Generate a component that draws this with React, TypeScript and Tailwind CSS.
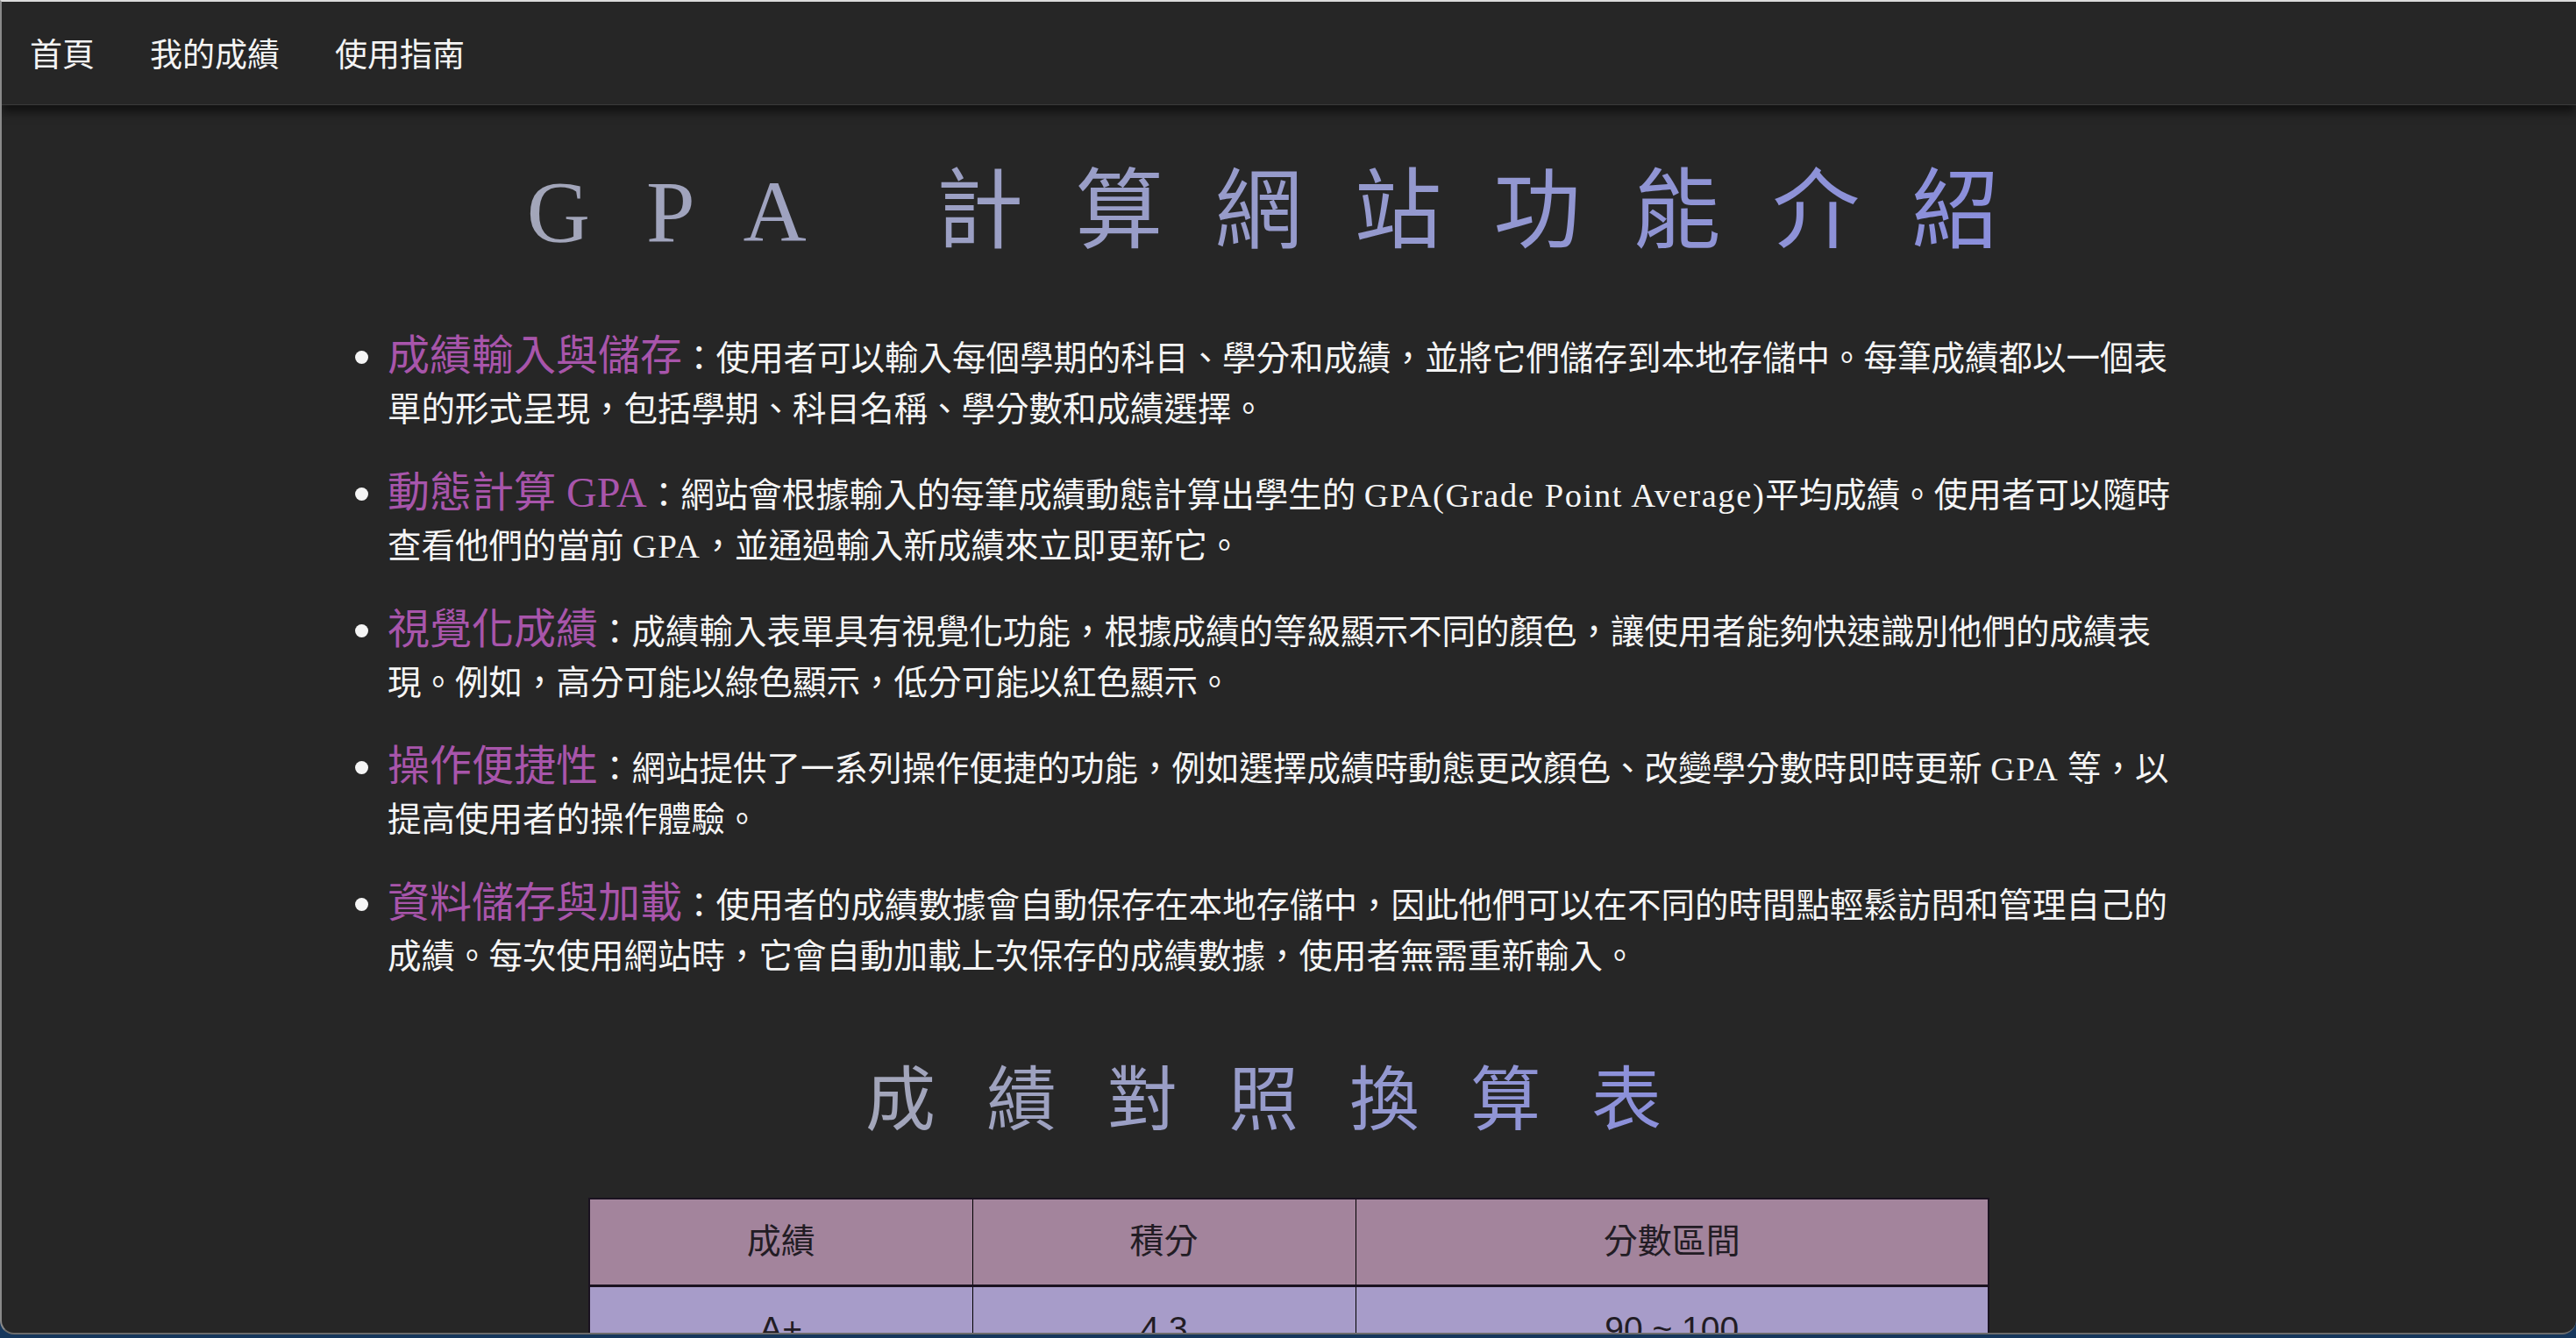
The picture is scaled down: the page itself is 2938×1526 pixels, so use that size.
const features = [
  {
    title: "成績輸入與儲存",
    lines: [
      "：使用者可以輸入每個學期的科目、學分和成績，並將它們儲存到本地存儲中。每筆成績都以一個表",
      "單的形式呈現，包括學期、科目名稱、學分數和成績選擇。",
    ],
  },
  {
    title: "動態計算 GPA",
    lines: [
      "：網站會根據輸入的每筆成績動態計算出學生的 GPA(Grade Point Average)平均成績。使用者可以隨時",
      "查看他們的當前 GPA，並通過輸入新成績來立即更新它。",
    ],
  },
  {
    title: "視覺化成績",
    lines: [
      "：成績輸入表單具有視覺化功能，根據成績的等級顯示不同的顏色，讓使用者能夠快速識別他們的成績表",
      "現。例如，高分可能以綠色顯示，低分可能以紅色顯示。",
    ],
  },
  {
    title: "操作便捷性",
    lines: [
      "：網站提供了一系列操作便捷的功能，例如選擇成績時動態更改顏色、改變學分數時即時更新 GPA 等，以",
      "提高使用者的操作體驗。",
    ],
  },
  {
    title: "資料儲存與加載",
    lines: [
      "：使用者的成績數據會自動保存在本地存儲中，因此他們可以在不同的時間點輕鬆訪問和管理自己的",
      "成績。每次使用網站時，它會自動加載上次保存的成績數據，使用者無需重新輸入。",
    ],
  },
]

const grades = [
  ["A+", "4.3", "90 ~ 100"],
  ["A", "4.0", "85 ~ 89"],
  ["A-", "3.7", "80 ~ 84"],
  ["B+", "3.3", "77 ~ 79"],
  ["B", "3.0", "73 ~ 76"],
  ["B-", "2.7", "70 ~ 72"],
  ["C+", "2.3", "67 ~ 69"],
  ["C", "2.0", "63 ~ 66"],
  ["C-", "1.7", "60 ~ 62"],
  ["F", "0", "0 ~ 59"],
]

// latin runs get a touch of tracking so they read as wide as the original serif
function Line({ text }: { text: string }) {
  const parts = text.split(/([A-Za-z][A-Za-z() ]*[A-Za-z)])/)
  return (
    <>
      {parts.map((p, i) =>
        i % 2 === 1 ? (
          <span key={i} className="tracking-[1.6px]">
            {p}
          </span>
        ) : (
          p
        )
      )}
    </>
  )
}

export default function App() {
  return (
    <div className="h-screen w-full overflow-hidden bg-[#16375c]">
      <div className="flex h-[1522px] flex-col overflow-hidden rounded-b-[16px] border-2 border-r-0 border-[#6b6b6b] border-t-[#dcdcdc] border-l-[#8a8a8a] bg-[#262626] font-['Liberation_Serif','Noto_Sans_CJK_TC',serif]">
        <nav className="relative z-10 flex h-[118px] shrink-0 items-center gap-[63px] border-b border-[#3a3a3a] bg-[#262626] pl-[32px] font-['Noto_Sans_CJK_TC',sans-serif] text-[37px] text-[#f4f4f4] shadow-[0_8px_10px_rgba(0,0,0,0.55)]">
          <a>首頁</a>
          <a>我的成績</a>
          <a>使用指南</a>
        </nav>

        <main className="flex-1">
          <h1 className="mt-[62px] text-center text-[100px] leading-[120px]">
            <span className="inline-block bg-linear-to-r from-[#a3a6b9] to-[#8a8edd] bg-clip-text text-transparent">
              <span className="tracking-[64px]">GPA </span>
              <span className="tracking-[59px]">計算網站功能介紹</span>
            </span>
          </h1>

          <ul className="mx-auto mt-[74px] flex w-[2056px] list-outside list-disc flex-col gap-[36px] text-[38.5px] leading-[58px] text-[#f5f5f5] marker:text-[52px]">
            {features.map((item, i) => (
              <li key={i} className="whitespace-nowrap">
                <span className="text-[48px] text-[#a855ab]">{item.title}</span>
                <Line text={item.lines[0]} />
                <br />
                <Line text={item.lines[1]} />
              </li>
            ))}
          </ul>

          <h2 className="mt-[79px] text-center font-['Noto_Sans_CJK_TC',sans-serif] text-[80px] leading-[96px]">
            <span className="inline-block bg-linear-to-r from-[#a3a6b9] to-[#8a8edd] bg-clip-text tracking-[58px] text-transparent">
              成績對照換算表
            </span>
          </h2>

          <table className="mx-auto mt-[71px] w-[1598px] table-fixed border-collapse border-2 border-[#1a1220] font-['Liberation_Sans','Noto_Sans_CJK_TC',sans-serif] text-[39px] text-[#221c24]">
            <thead>
              <tr className="h-[99px] border-b-[3px] border-[#1a1220] bg-[#a3849c]">
                <th className="w-[437px] border-r border-black font-normal">成績</th>
                <th className="w-[437px] border-r border-black font-normal">積分</th>
                <th className="font-normal">分數區間</th>
              </tr>
            </thead>
            <tbody>
              {grades.map((g) => (
                <tr key={g[0]} className="h-[99px] border-b-2 border-[#1a1220] bg-[#a79cc9] text-center">
                  <td className="border-r border-black">{g[0]}</td>
                  <td className="border-r border-black">{g[1]}</td>
                  <td>{g[2]}</td>
                </tr>
              ))}
            </tbody>
          </table>
        </main>
      </div>
    </div>
  )
}
